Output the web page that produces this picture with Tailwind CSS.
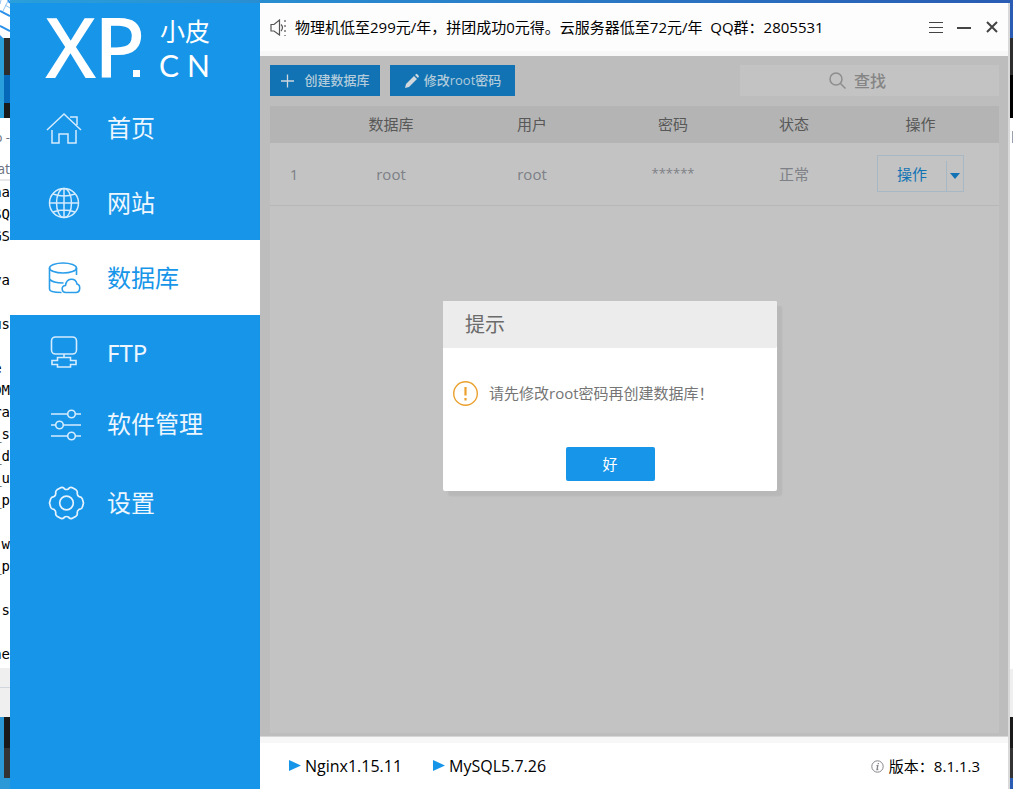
<!DOCTYPE html>
<html lang="zh-CN">
<head>
<meta charset="utf-8">
<title>小皮面板</title>
<script src="https://cdn.jsdelivr.net/npm/@tailwindcss/browser@4"></script>
</head>
<body class="flex h-screen overflow-hidden bg-white font-['Open_Sans','Noto_Sans_CJK_SC',sans-serif] text-[15px] text-black">

<!-- desktop visible left of the window -->
<div class="flex w-[10px] shrink-0 flex-col overflow-hidden bg-white" aria-hidden="true">
  <svg class="h-[38px] w-[10px] shrink-0" viewBox="0 0 10 38" fill="none"><path fill="#fff" d="M0 0h10v38H0z"/><path stroke="#2a90ea" stroke-width="2" d="M0 11 10 16M0 26l10 5M8 0l2 3"/><path stroke="#8fc3f2" d="M1 0 0 4M8 1 3 11M5 5l5 3"/><path fill="#2a90ea" d="M0 35l3 3H0z"/></svg>
  <div class="h-[80px] shrink-0 border-l-4 border-[#29a0dc]"><div class="h-[37px] bg-[#2d2d2d]"></div><div class="h-[28px] bg-[#0568b8]"></div><div class="h-[15px] bg-[#191919]"></div></div>
  <div class="flex h-[40px] shrink-0 items-center justify-end text-[13px] text-gray-500"><span class="whitespace-pre">p -</span></div>
  <div class="flex h-[23px] shrink-0 items-center justify-end border-b-2 border-gray-200 text-sm text-gray-500"><span>at</span></div>
  <div class="flex shrink-0 justify-end"><pre class="text-right font-['DejaVu_Sans_Mono',monospace] text-[14px] leading-[22px]">na
SQ
GS

va

us

e 
DM
ra
_s
_d
_u
_p

w
_p

s
- 
ne</pre></div>
  <div class="mt-[3px] h-[20px] shrink-0 border-b border-gray-300 bg-[#efefef]"></div>
  <div class="h-[29px] shrink-0 bg-[#efefef]"></div>
  <div class="flex-1 border-l-4 border-[#2b98d8] bg-[#2b98d8]"><div class="h-[31px] bg-[#191919]"></div><div class="h-[30px] bg-[#333]"></div></div>
</div>

<div class="flex min-w-0 flex-1 flex-col">
  <div class="h-[3px] shrink-0 bg-linear-to-r from-[#299fdb] to-[#2a5cb4]"></div>
  <div class="flex min-h-0 flex-1">

    <aside class="w-[250px] shrink-0 bg-[#1695e9] font-['Noto_Sans','Noto_Sans_CJK_SC',sans-serif] text-white">
      <svg class="h-[87px] w-full" viewBox="10 3 250 87" fill="#fff" role="img" aria-label="XP.CN 小皮">
        <text y="78" font-size="84" font-weight="500"><tspan x="45">X</tspan><tspan x="94">P</tspan></text>
        <path d="M133 70h7v7h-7z"/>
        <text x="160" y="41" font-size="25">小皮</text>
        <text y="77" font-size="30" font-family="Lato"><tspan x="159">C</tspan><tspan x="187">N</tspan></text>
      </svg>
      <nav class="text-2xl text-[#eef7ff]">
        <a href="#" class="flex h-[75px] items-center gap-[25px] pl-9">
          <svg class="size-9" viewBox="0 0 36 36" fill="none" stroke="#d5ecff" stroke-width="1.5"><path d="m1 20 17-16 17 16M24 7h7v8M6 20v13h7v-9h9v9h8V20"/></svg>首页</a>
        <a href="#" class="flex h-[75px] items-center gap-[25px] pl-9">
          <svg class="size-9" viewBox="0 0 36 36" fill="none" stroke="#d5ecff" stroke-width="1.5"><circle cx="18" cy="18" r="14.5"/><ellipse cx="18" cy="18" rx="7.5" ry="14.5"/><path d="M18 3.500v29M3.500 18h29M7 9q11 4 22 0M7 27q11-4 22 0"/></svg>网站</a>
        <a href="#" aria-current="page" class="flex h-[75px] items-center gap-[25px] bg-white pl-9 text-[#1695e9]">
          <svg class="size-9" viewBox="0 0 36 36" fill="none" stroke="#2b9eea" stroke-width="1.600"><ellipse cx="17" cy="8" rx="13.500" ry="5"/><path d="M3.500 8v21c0 3 6 3.500 12 3.500M30.500 8v7M3.500 19c2 3 8 4 14 4"/><path d="M20 32.500c-5 0-5-7-.5-7 1-8 10-8 11.500-1.500 4 1 3.500 8.500-1 8.500z"/></svg>数据库</a>
        <a href="#" class="flex h-[75px] items-center gap-[25px] pl-9">
          <svg class="size-9" viewBox="0 0 36 36" fill="none" stroke="#d5ecff" stroke-width="1.600"><rect x="5.500" y="2" width="25" height="17" rx="4"/><path d="M18 19v3.500M11.500 22.500h13v3h5.500v4h-5.500v2.500h-13v-2.500H6v-4h5.500z"/></svg>FTP</a>
        <a href="#" class="flex h-[75px] items-center gap-[25px] pb-2 pl-9">
          <svg class="size-9" viewBox="0 0 36 36" fill="none" stroke="#d5ecff" stroke-width="1.600"><path d="M5 8h16.500M29 8h6M5 19h4.500M17 19h18M5 30h16.500M29 30h6"/><circle cx="25.500" cy="8" r="3.800"/><circle cx="13.500" cy="19" r="3.800"/><circle cx="25.500" cy="30" r="3.800"/></svg>软件管理</a>
        <a href="#" class="flex h-[75px] items-center gap-[25px] pl-9">
          <svg class="size-9 overflow-visible" viewBox="0 0 36 36" fill="none" stroke="#e5f3ff" stroke-width="1.700"><circle cx="20.500" cy="18" r="6.800"/><path d="M15 2.600q2.500-.6 3.600 1.400 1.900 1 3.800 0 1.100-2 3.600-1.400l4 2.200q1.800 1.400 1.200 3.400 0 2.400 1.800 3.400 2.500.2 3.300 2.200l1.200 4.200-1.200 4.200q-.8 2-3.300 2.200-1.800 1-1.800 3.400.6 2-1.200 3.400l-4 2.200q-2.500.6-3.600-1.400-1.900-1-3.800 0-1.100 2-3.600 1.400l-4-2.200q-1.800-1.400-1.200-3.400 0-2.400-1.800-3.400-2.500-.2-3.300-2.200L3.500 18l1.200-4.200q.8-2 3.300-2.200 1.800-1 1.800-3.400-.6-2 1.200-3.400z"/></svg>设置</a>
      </nav>
    </aside>

    <div class="relative flex min-w-0 flex-1 flex-col border-r-2 border-[#d9d9d9]">
      <header class="flex h-[53px] shrink-0 items-center gap-2 border-t border-b-[5px] border-t-white border-b-[#f7f7f7] bg-[#fdfdfd] px-2 shadow-[0_1px_0_#d6d6d6]">
        <svg class="ml-[2px] size-[17px] shrink-0" viewBox="0 0 17 17" fill="none" stroke="#555" stroke-width="1.200"><path d="M1 5.500h3L9.500 1v15L4 12H1zM11 5.500q3 3 0 6.500"/><path stroke-dasharray="2 3" d="M15 1v16"/></svg>
        <p class="flex-1 whitespace-pre">物理机低至299元/年，拼团成功0元得。云服务器低至72元/年  QQ群：2805531</p>
        <div class="flex items-center gap-3 text-[#444]">
          <button aria-label="菜单"><svg class="size-4" viewBox="0 0 16 16" stroke="currentColor"><path d="M1 2.500h14M1 7.500h14M1 12.500h14"/></svg></button>
          <button aria-label="最小化"><svg class="size-4" viewBox="0 0 16 16" stroke="currentColor" stroke-width="2"><path d="M1 8h14"/></svg></button>
          <button aria-label="关闭"><svg class="size-4" viewBox="0 0 16 16" stroke="currentColor" stroke-width="2"><path d="m3 2 10 10M13 2 3 12"/></svg></button>
        </div>
      </header>

      <main class="flex min-h-0 flex-1 flex-col bg-[#bdbdbd] px-[10px] pt-[9px] pr-[9px] pb-1">
        <div class="flex h-[31px] shrink-0 gap-[10px] text-[13px] font-medium text-[#b3cbdb]">
          <button class="flex w-[110px] items-center justify-center gap-2 bg-[#1173b3]"><svg class="size-4 shrink-0" viewBox="0 0 16 16" stroke="#d0d8de" stroke-width="1.300"><path d="M1 8h13M7.500 1.500v13"/></svg>创建数据库</button>
          <button class="flex w-[125px] items-center justify-center gap-1 bg-[#1173b3] whitespace-nowrap"><svg class="size-4 shrink-0" viewBox="0 0 16 16" fill="#d0d8de"><path d="m1 15 1-4 8-8 3 3-8 8zM11 2l1.500-1.300q1 0 2.500 2.600L14 5z"/></svg>修改root密码</button>
          <label class="ml-auto flex w-[259px] items-center gap-2 bg-[#c3c3c3] pl-[89px]"><svg class="size-[17px] shrink-0" viewBox="0 0 17 17" fill="none" stroke="#8d8d8d" stroke-width="1.500"><circle cx="7" cy="7" r="6"/><path d="m11.500 11.500 5 5"/></svg><input aria-label="查找" placeholder="查找" class="w-full min-w-0 bg-transparent text-base text-[#858585] outline-none placeholder:text-[#858585]"></label>
        </div>
        <div class="mt-[10px] flex-1 bg-[#c3c3c3]">
          <table class="w-full table-fixed text-center">
            <colgroup><col class="w-[48px]"><col class="w-[146px]"><col class="w-[136px]"><col class="w-[146px]"><col class="w-[96px]"><col class="w-[157px]"></colgroup>
            <thead><tr class="h-[37px] bg-[#b4b4b4] text-[#585858]"><th></th><th class="font-normal">数据库</th><th class="font-normal">用户</th><th class="font-normal">密码</th><th class="font-normal">状态</th><th class="font-normal">操作</th></tr></thead>
            <tbody><tr class="h-[62px] border-b border-[#b7b7b7] text-[#7d8086]"><td>1</td><td>root</td><td>root</td><td class="text-[13px]">******</td><td>正常</td>
              <td><div class="mx-auto flex h-[37px] w-[87px] border border-[#a7b7c3] text-[#1173b3]"><button class="flex-1">操作</button><button aria-label="更多操作" class="mt-[5px] flex w-[17px] items-center justify-center border-l border-[#a7b7c3]"><svg class="h-[6px] w-[10px]" viewBox="0 0 10 6" fill="currentColor"><path d="M0 0h10L5 6z"/></svg></button></div></td></tr></tbody>
          </table>
        </div>
      </main>

      <footer class="flex h-[52px] shrink-0 items-center border-t-[6px] border-[#f7f7f7] bg-white px-7 shadow-[0_-1px_0_#d6d6d6]">
        <span class="flex items-center gap-1 text-base"><svg class="size-[13px]" viewBox="0 0 13 13" fill="#1695e9"><path d="M1 0v11l12-5.500z"/></svg>Nginx1.15.11</span>
        <span class="ml-[30px] flex items-center gap-1 text-base"><svg class="size-[13px]" viewBox="0 0 13 13" fill="#1695e9"><path d="M1 0v11l12-5.500z"/></svg>MySQL5.7.26</span>
        <span class="ml-auto flex items-center gap-[5px]"><svg class="size-[13px]" viewBox="0 0 13 13" fill="none" stroke="#85858c"><circle cx="6.500" cy="6.500" r="5.700"/><path stroke-width="1.300" d="M7.300 3v1.300M5.500 5.700h1.300l-.8 3.800h1.300"/></svg>版本：8.1.1.3</span>
      </footer>

      <div role="dialog" aria-labelledby="tip" class="absolute top-1/2 left-[183px] w-[334px] -translate-y-1/2 rounded-xs bg-white text-[#757575] shadow-[5px_5px_2px_#b8b8b8]">
        <h2 id="tip" class="flex h-[47px] items-center rounded-r-xs bg-[#ececec] px-[22px] text-xl text-[#6b6b6b]">提示</h2>
        <div class="flex h-[90px] items-center gap-[11px] px-[10px]">
          <svg class="size-[25px] shrink-0" viewBox="0 0 25 25" fill="none" stroke="#eba02e" stroke-width="1.400"><circle cx="12.500" cy="12.500" r="11.800"/><path stroke-width="2.200" d="M12.500 6v8.500M12.500 17v2.500"/></svg>
          <p>请先修改root密码再创建数据库！</p>
        </div>
        <div class="flex justify-center pt-[9px] pb-[10px]"><button class="h-[34px] w-[89px] rounded-xs bg-[#1695e9] text-white">好</button></div>
      </div>
    </div>

    <!-- desktop visible right of the window -->
    <div class="flex w-[3px] shrink-0 flex-col" aria-hidden="true">
      <div class="h-[35px] bg-[#2a5cb4]"></div><div class="h-[37px] bg-[#2d2d2d]"></div><div class="h-[43px] bg-black"></div>
      <div class="flex-1 bg-white pt-[13px]"><div class="ml-[2px] h-[12px] bg-gray-400"></div></div>
      <div class="h-[48px] bg-[#efefef]"></div><div class="h-[31px] bg-[#191919]"></div><div class="h-[30px] bg-[#333]"></div><div class="h-[11px] bg-[#2a5cb4]"></div>
    </div>
  </div>
</div>
</body>
</html>
